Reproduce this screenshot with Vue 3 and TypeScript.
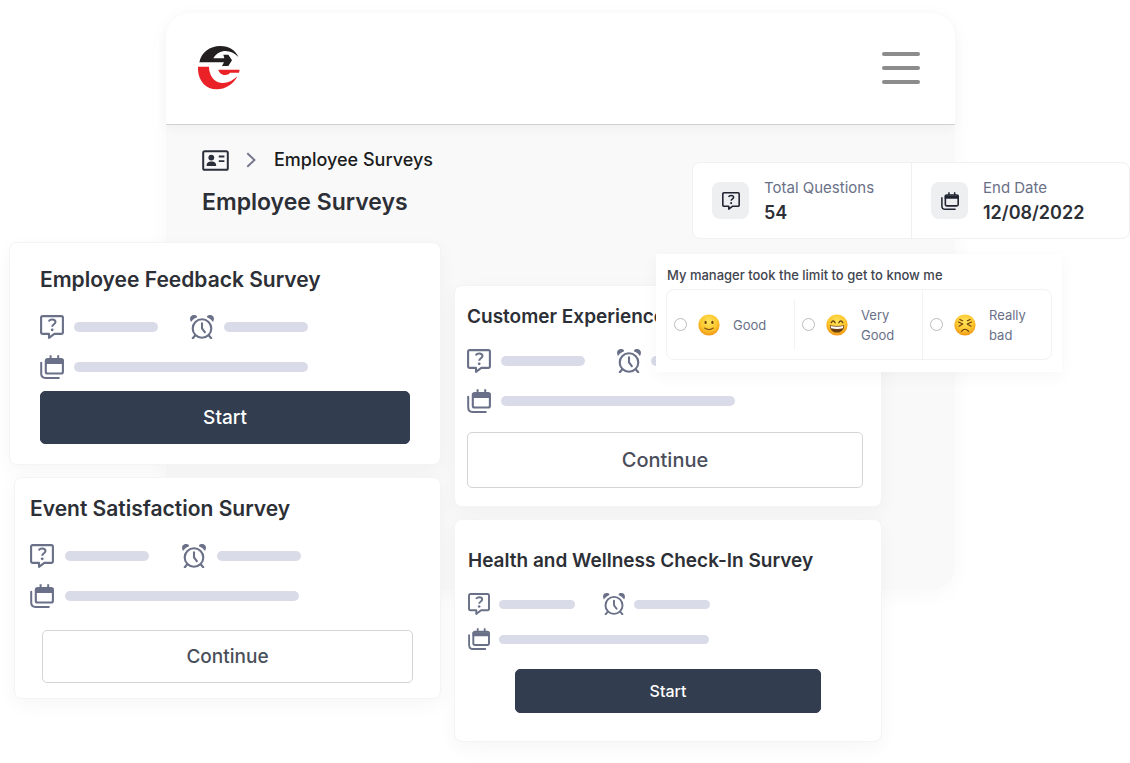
<script setup lang="ts">
interface Survey {
  id: string
  title: string
  action: string
  primary: boolean
}

const columns: Survey[][] = [
  [
    { id: 'feedback', title: 'Employee Feedback Survey', action: 'Start', primary: true },
    { id: 'event', title: 'Event Satisfaction Survey', action: 'Continue', primary: false },
  ],
  [
    { id: 'customer', title: 'Customer Experience', action: 'Continue', primary: false },
    { id: 'wellness', title: 'Health and Wellness Check-In Survey', action: 'Start', primary: true },
  ],
]

const options = [
  { id: 'good', label: 'Good' },
  { id: 'very-good', label: 'Very Good' },
  { id: 'really-bad', label: 'Really bad' },
]
</script>

<template>
  <main class="stage">
    <svg class="defs" aria-hidden="true">
      <defs>
        <symbol id="i-question" viewBox="0 0 24 24">
          <path d="M2.600 1.100H21.400A1.500 1.500 0 0 1 22.900 2.600V17.400A1.500 1.500 0 0 1 21.400 18.900H14.300L9 22.800V18.900H2.600A1.500 1.500 0 0 1 1.100 17.400V2.600A1.500 1.500 0 0 1 2.600 1.100Z" fill="none" stroke="currentColor" stroke-width="2.100" stroke-linejoin="round" />
          <path d="M8.900 6.600C9.300 5.200 10.500 4.600 12.200 4.600C14.200 4.600 15.500 5.500 15.500 7.100C15.500 9.300 12.200 9.200 12.200 11.800" fill="none" stroke="currentColor" stroke-width="2" />
          <circle cx="12.200" cy="14.800" r="1.400" fill="currentColor" />
        </symbol>
        <symbol id="i-clock" viewBox="0 0 24 24">
          <g fill="none" stroke="currentColor" stroke-width="2.100">
            <circle cx="12" cy="13.500" r="9.300" />
            <path d="M12 8.300V13.300L14.800 17.200M5.300 20.300L2.800 23.200M18.700 20.300L21.200 23.200" stroke-linecap="round" stroke-linejoin="round" />
          </g>
          <path d="M1 7C-1 3.800.200 0 4 0C5.600 0 6.600.600 7 1.400C7 2.200 6.400 2.700 5.500 3.100C3.800 4 2.400 5.200 1 7ZM23 7C25 3.800 23.800 0 20 0C18.400 0 17.400.600 17 1.400C17 2.200 17.600 2.700 18.500 3.100C20.200 4 21.600 5.200 23 7Z" fill="currentColor" />
        </symbol>
        <symbol id="i-calendar" viewBox="0 0 24 24">
          <path d="M1.200 7.800V18.500C1.200 21.200 2.600 22.900 5.500 22.900H18.800" fill="none" stroke="currentColor" stroke-width="2" stroke-linecap="round" />
          <rect x="5.800" y="4" width="17.100" height="14.500" rx="1.800" fill="none" stroke="currentColor" stroke-width="2.100" />
          <path d="M5 4.500H23.500V9H5ZM9.600.200H11.600V4H9.600ZM17.200.200H19.200V4H17.200Z" fill="currentColor" />
        </symbol>
        <radialGradient id="face" cx="50%" cy="35%" r="65%">
          <stop offset="0" stop-color="#ffe45c" />
          <stop offset=".6" stop-color="#fdc82f" />
          <stop offset="1" stop-color="#ef9414" />
        </radialGradient>
      </defs>
    </svg>

    <section class="device">
      <header class="topbar">
        <a href="#" class="brand" aria-label="Home">
          <svg viewBox="114 124 126 132" aria-hidden="true">
            <path d="M118 173C124 143 149 124 181 124C208 124 226 137 235 157C214 134 178 130 160 161H193L190 150H205L216 167L205 184H186L192 173Z" fill="#231f20" />
            <path d="M114 186H147C147 212 162 233 186 235C203 236 218 228 232 215C220 240 196 254 170 254C136 254 112 226 114 186Z" fill="#ea2127" />
            <path d="M175 195H239L237 204H210C203 215 179 213 175 195Z" fill="#ea2127" />
          </svg>
        </a>
        <button type="button" class="burger" aria-label="Menu">
          <span></span><span></span><span></span>
        </button>
      </header>
      <div class="content">
        <nav class="crumbs" aria-label="Breadcrumb">
          <svg class="id-icon" viewBox="0 0 27 21" aria-hidden="true">
            <rect x="1.200" y="1.200" width="24.600" height="18.600" rx="1.600" fill="none" stroke="#2b2f3a" stroke-width="2" />
            <circle cx="9.300" cy="7.600" r="2.900" fill="#2b2f3a" />
            <path d="M4.500 16C4.500 12.800 6.300 11.600 9.300 11.600S14.200 12.800 14.200 16ZM16.800 5.600H22.400V7.400H16.800ZM16.800 10.200H22.400V12H16.800Z" fill="#2b2f3a" />
          </svg>
          <svg class="chevron" viewBox="0 0 10 16" aria-hidden="true">
            <path d="M1.300 1.200L8.500 8L1.300 14.800" fill="none" stroke="#74768c" stroke-width="1.900" />
          </svg>
          <a href="#">Employee Surveys</a>
        </nav>
        <h1>Employee Surveys</h1>
      </div>
    </section>

    <section class="board">
      <div v-for="(column, i) in columns" :key="i" class="column">
        <article v-for="s in column" :key="s.id" class="card" :class="s.id">
          <h2>{{ s.title }}</h2>
          <div class="meta">
            <svg class="icon" aria-hidden="true"><use href="#i-question" /></svg>
            <span class="bar"></span>
            <svg class="icon clock" aria-hidden="true"><use href="#i-clock" /></svg>
            <span class="bar"></span>
          </div>
          <div class="meta">
            <svg class="icon" aria-hidden="true"><use href="#i-calendar" /></svg>
            <span class="bar long"></span>
          </div>
          <button type="button" class="action" :class="{ primary: s.primary }">{{ s.action }}</button>
        </article>
      </div>
    </section>

    <aside class="floating">
      <dl class="summary">
        <div class="stat">
          <span class="tile"><svg aria-hidden="true"><use href="#i-question" /></svg></span>
          <div>
            <dt>Total Questions</dt>
            <dd>54</dd>
          </div>
        </div>
        <div class="stat">
          <span class="tile"><svg aria-hidden="true"><use href="#i-calendar" /></svg></span>
          <div>
            <dt>End Date</dt>
            <dd>12/08/2022</dd>
          </div>
        </div>
      </dl>

      <fieldset class="poll">
        <legend>My manager took the limit to get to know me</legend>
        <div class="options">
          <label v-for="o in options" :key="o.id" class="option">
            <input type="radio" name="rating" :value="o.id" />
            <svg class="emoji" viewBox="0 0 22 22" aria-hidden="true">
              <circle cx="11" cy="11" r="10.600" fill="url(#face)" />
              <g v-if="o.id === 'good'">
                <ellipse cx="7.600" cy="8.400" rx="1.100" ry="1.700" fill="#69400f" />
                <ellipse cx="14.400" cy="8.400" rx="1.100" ry="1.700" fill="#69400f" />
                <path d="M6.600 14Q11 17.200 15.400 14" fill="none" stroke="#8a560f" stroke-width="1.100" stroke-linecap="round" />
              </g>
              <g v-else-if="o.id === 'very-good'">
                <path d="M5.200 8.800Q7.200 4.800 9.200 8.800M12.800 8.800Q14.800 4.800 16.800 8.800" fill="none" stroke="#5d3a0e" stroke-width="1.200" stroke-linecap="round" />
                <path d="M3.800 11.200Q11 12.800 18.200 11.200C18 16 15 18.600 11 18.600S4 16 3.800 11.200Z" fill="#6b3d12" />
                <path d="M4.600 12Q11 13.400 17.400 12L16.900 14.300Q11 15.700 5.100 14.300Z" fill="#fff" />
              </g>
              <g v-else fill="none" stroke="#6b3f0d" stroke-width="1.100" stroke-linecap="round" stroke-linejoin="round">
                <path d="M4.500 8L8.800 10L5 12.200M17.500 8L13.200 10L17 12.200M5.800 5.600L8.600 6.800M16.200 5.600L13.400 6.800" />
                <path d="M7.400 17.300Q11 13.200 14.600 17.300" />
              </g>
            </svg>
            <span>{{ o.label }}</span>
          </label>
        </div>
      </fieldset>
    </aside>
  </main>
</template>

<style>
body {
  background: #fff;
}
</style>

<style scoped>
.stage,
.stage * {
  box-sizing: border-box;
}

.stage {
  display: grid;
  min-height: 100vh;
  overflow: hidden;
  font-family: Inter, "Liberation Sans", sans-serif;
  color: #2d2f36;
}

.stage > * {
  grid-area: 1 / 1;
}

.defs {
  width: 0;
  height: 0;
}

button {
  font: inherit;
  cursor: pointer;
}

h1,
h2,
dl,
dd {
  margin: 0;
}

a {
  color: inherit;
  text-decoration: none;
}

.device {
  align-self: start;
  min-height: 577px;
  margin: 13px 175px 0 166px;
  border-radius: 24px;
  background: #f9f9fa;
  box-shadow: 0 4px 24px rgba(0, 0, 0, 0.03);
}

.topbar {
  display: flex;
  align-items: center;
  justify-content: space-between;
  height: 112px;
  padding: 0 35px 2px 32px;
  border-bottom: 1px solid #cfd1d3;
  border-radius: 24px 24px 0 0;
  background: #fff;
  box-shadow: 0 4px 12px rgba(0, 0, 0, 0.04);
}

.brand svg {
  display: block;
  width: 42px;
  height: 44px;
}

.burger {
  display: flex;
  flex-direction: column;
  gap: 10px;
  width: 38px;
  padding: 0;
  border: 0;
  background: none;
}

.burger span {
  height: 4px;
  border-radius: 2px;
  background: #8c8c8c;
}

.content {
  padding: 22px 36px;
}

.crumbs {
  display: flex;
  align-items: center;
  font-size: 18px;
  font-weight: 500;
  line-height: 26px;
  color: #1b1c20;
}

.id-icon {
  width: 27px;
  height: 21px;
}

.chevron {
  width: 10px;
  height: 16px;
  margin: 0 18px 0 17px;
}

h1 {
  margin-top: 12px;
  font-size: 23px;
  font-weight: 600;
  line-height: 34px;
}

.board {
  display: grid;
  grid-template-columns: minmax(0, 432fr) minmax(0, 428fr);
  gap: 13px;
  align-content: start;
  padding: 242px 248px 22px 9px;
}

.column {
  display: flex;
  flex-direction: column;
  gap: 12px;
}

.column + .column {
  padding-top: 43px;
}

.card {
  display: flex;
  flex-direction: column;
  border: 1px solid #f3f4f6;
  border-radius: 8px;
  background: #fff;
  box-shadow: 0 6px 20px rgba(0, 0, 0, 0.04);
}

.card h2 {
  margin-bottom: 20px;
  font-size: 21px;
  font-weight: 600;
  line-height: 30px;
  white-space: nowrap;
}

.meta {
  display: flex;
  align-items: center;
  gap: 10px;
  margin-bottom: 16px;
  color: #697087;
}

.icon {
  flex: none;
  width: 24px;
  height: 24px;
}

.clock {
  margin-left: 22px;
}

.bar {
  width: 84px;
  height: 10px;
  border-radius: 5px;
  background: #dadbe9;
}

.bar.long {
  width: 234px;
}

.action {
  height: 53px;
  border: 1px solid #d3d5d8;
  border-radius: 5px;
  background: #fff;
  color: #4a4e5a;
  font-size: 19px;
  font-weight: 500;
}

.action.primary {
  border-color: #333d50;
  background: #333d50;
  color: #fff;
}

.feedback {
  padding: 22px 30px 20px;
}

.feedback .action {
  margin-top: -4px;
}

.event {
  margin-left: 5px;
  padding: 16px 27px 15px 15px;
}

.event .meta {
  gap: 11px;
}

.event .action {
  margin: 6px 0 0 12px;
}

.customer {
  padding: 16px 18px 18px 12px;
}

.customer h2,
.wellness h2 {
  margin-bottom: 17px;
  font-size: 19px;
}

.customer .action {
  height: 56px;
  margin-top: 3px;
  font-size: 20px;
}

.wellness {
  padding: 26px 60px 28px 13px;
}

.wellness .icon {
  width: 22px;
  height: 22px;
}

.wellness .meta {
  gap: 9px;
  margin-bottom: 13px;
}

.wellness .clock {
  margin-left: 19px;
}

.wellness .bar {
  width: 76px;
  height: 9px;
}

.wellness .bar.long {
  width: 210px;
}

.wellness .action {
  height: 44px;
  margin: 6px 0 0 47px;
  font-size: 16px;
}

.floating {
  display: flex;
  flex-direction: column;
  align-items: flex-end;
  gap: 15px;
  justify-self: end;
  align-self: start;
  padding-top: 162px;
}

.summary {
  display: grid;
  grid-template-columns: 1fr 1fr;
  width: 438px;
  height: 77px;
  border: 1px solid #f0f0f2;
  border-radius: 8px;
  background: #fff;
}

.stat {
  display: flex;
  align-items: center;
  gap: 15px;
  padding-left: 19px;
}

.stat + .stat {
  border-left: 1px solid #f0f0f2;
}

.tile {
  display: grid;
  place-items: center;
  width: 37px;
  height: 37px;
  border-radius: 8px;
  background: #edeff1;
  color: #1f2430;
}

.tile svg {
  width: 18px;
  height: 18px;
}

dt {
  font-size: 15px;
  line-height: 24px;
  color: #697087;
}

dd {
  font-size: 18px;
  font-weight: 600;
  line-height: 26px;
}

.poll {
  width: 406px;
  margin: 0 68px 0 0;
  padding: 12px 10px;
  border: 0;
  background: #fff;
  box-shadow: 0 4px 16px rgba(0, 0, 0, 0.04);
}

.poll legend {
  float: left;
  width: 100%;
  margin-bottom: 5px;
  padding: 0 0 0 1px;
  font-size: 13px;
  font-weight: 500;
  line-height: 18px;
  color: #41444f;
}

.options {
  display: grid;
  grid-template-columns: repeat(3, 1fr);
  clear: both;
  height: 71px;
  border: 1px solid #f2f2f4;
  border-radius: 8px;
}

.option {
  display: flex;
  align-items: center;
  font-size: 13px;
  line-height: 20px;
  color: #697087;
}

.option:nth-child(2) {
  border-right: 1px solid #f2f2f4;
}

.option input {
  appearance: none;
  flex: none;
  width: 13px;
  height: 13px;
  margin: 0 11px 0 7px;
  border: 1px solid #b9bbc0;
  border-radius: 50%;
}

.option input:checked {
  border: 4px solid #333d50;
}

.option span {
  width: 48px;
}

.option:first-child::after {
  content: "";
  width: 1px;
  height: 50px;
  margin-left: auto;
  background: #f2f2f4;
}

.emoji {
  flex: none;
  width: 22px;
  height: 22px;
  margin-right: 13px;
}
</style>
